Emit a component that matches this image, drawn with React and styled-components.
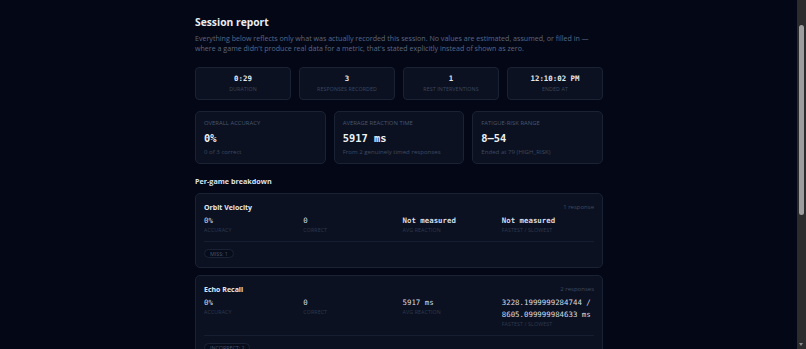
import React from 'react';
import styled, { createGlobalStyle } from 'styled-components';

const GlobalStyle = createGlobalStyle`
    html, body {
        margin: 0;
        padding: 0;
        background-color: #040716;
    }
    body {
        font-family: "Open Sans", "Noto Sans", sans-serif;
        color: #e2e8f0;
    }
    * {
        box-sizing: border-box;
    }
`;

const PageDiv = styled.div`
    min-height: 590px;
    padding: 15px 8px 40px 0px;
`;

// drawn scrollbar, sits over the right edge like the browser's own
const ScrollTrack = styled.div`
    position: fixed;
    top: 0px;
    right: 0px;
    width: 9px;
    height: 100vh;
    background-color: #2c2c2e;
`;

const ScrollThumb = styled.div`
    position: absolute;
    left: 2px;
    top: 25px;
    width: 5px;
    height: 190px;
    border-radius: 3px;
    background-color: #9d9d9f;
`;

const ScrollArrow = styled.div`
    position: absolute;
    left: 2px;
    bottom: 3px;
    width: 0px;
    height: 0px;
    border-left: 2.5px solid transparent;
    border-right: 2.5px solid transparent;
    border-top: 3px solid #8a8a8c;
`;

const ReportDiv = styled.div`
    width: 408px;
    margin: 0 auto;
`;

const TitleH1 = styled.h1`
    font-size: 10.3px;
    line-height: 14px;
    font-weight: 700;
    margin: 0px;
    color: #e8edf4;
`;

const IntroP = styled.p`
    font-size: 7.1px;
    line-height: 10px;
    margin: 4px 0px 0px 0px;
    color: #5a6882;
`;

const TileRow = styled.div`
    display: grid;
    grid-template-columns: repeat(4, 1fr);
    gap: 8px;
    margin-top: 14px;
`;

const Tile = styled.div`
    background-color: #0b1120;
    border: 1px solid #1a2234;
    border-radius: 4px;
    padding: 6px 4px 6px 4px;
    text-align: center;
`;

const TileValue = styled.div`
    font-family: "DejaVu Sans Mono", "Liberation Mono", monospace;
    font-weight: 700;
    font-size: 7.4px;
    line-height: 10px;
    color: #e2e8f0;
`;

const SmallLabel = styled.div`
    font-size: 5.3px;
    line-height: 7px;
    text-transform: uppercase;
    letter-spacing: 0.1px;
    color: ${props => props.dim ? '#2f3a50' : '#3c4860'};
    margin-top: ${props => props.gap || 0}px;
`;

const MetricRow = styled.div`
    display: grid;
    grid-template-columns: repeat(3, 1fr);
    gap: 8px;
    margin-top: 11px;
`;

const MetricCard = styled.div`
    background-color: #0b1120;
    border: 1px solid #1a2234;
    border-radius: 5px;
    padding: 8px 8px 7px 8px;
`;

const MetricLabel = styled.div`
    font-size: 5.9px;
    line-height: 7px;
    text-transform: uppercase;
    color: #4a566d;
`;

const MetricValue = styled.div`
    font-family: "DejaVu Sans Mono", "Liberation Mono", monospace;
    font-weight: 700;
    font-size: 10.4px;
    line-height: 13px;
    margin-top: 4.5px;
    color: #eef2f7;
`;

const MetricSub = styled.div`
    font-size: 6.1px;
    line-height: 8px;
    margin-top: 3.5px;
    color: #3e4a60;
`;

const SectionH2 = styled.h2`
    font-size: 7.2px;
    line-height: 10px;
    font-weight: 700;
    margin: 12px 0px 7px 0px;
    color: #dbe2ec;
`;

const GameCard = styled.div`
    background-color: #0b1120;
    border: 1px solid #1a2234;
    border-radius: 5px;
    padding: 8px 8px 9px 8px;
    margin-bottom: 7px;
`;

const GameHeader = styled.div`
    display: flex;
    justify-content: space-between;
    align-items: center;
    height: 10px;
`;

const GameName = styled.div`
    font-size: 7px;
    font-weight: 700;
    color: #e2e8f0;
`;

const GameCount = styled.div`
    font-size: 6px;
    color: #3e4a60;
`;

const StatGrid = styled.div`
    display: grid;
    grid-template-columns: repeat(4, 1fr);
    gap: 7px;
    margin-top: 3px;
`;

const StatValue = styled.div`
    font-family: "DejaVu Sans Mono", "Liberation Mono", monospace;
    font-size: 7.4px;
    line-height: 12px;
    font-weight: ${props => props.strong ? 700 : 400};
    color: #d5dce6;
`;

const Divider = styled.div`
    height: 1px;
    background-color: #161e2f;
    margin-top: 7px;
`;

const ChipRow = styled.div`
    display: flex;
    gap: 4px;
    margin-top: 7px;
`;

const Chip = styled.span`
    height: 9px;
    line-height: 8px;
    padding: 0px 5px;
    border-radius: 5px;
    border: 1px solid #1a2336;
    background-color: #070c1a;
    font-size: 5.3px;
    text-transform: uppercase;
    color: #4a566d;
`;

const tiles = [
    { value: '0:29', label: 'Duration' },
    { value: '3', label: 'Responses recorded' },
    { value: '1', label: 'Rest interventions' },
    { value: '12:10:02 PM', label: 'Ended at' }
];

const metrics = [
    { label: 'Overall accuracy', value: '0%', sub: '0 of 3 correct' },
    { label: 'Average reaction time', value: '5917 ms', sub: 'From 2 genuinely timed responses' },
    { label: 'Fatigue-risk range', value: '8–54', sub: 'Ended at 79 (HIGH_RISK)' }
];

const games = [
    {
        name: 'Orbit Velocity',
        count: '1 response',
        stats: [
            { value: '0%', label: 'Accuracy' },
            { value: '0', label: 'Correct' },
            { value: 'Not measured', label: 'Avg reaction', strong: true },
            { value: 'Not measured', label: 'Fastest / slowest', strong: true }
        ],
        chips: ['Miss: 1']
    },
    {
        name: 'Echo Recall',
        count: '2 responses',
        stats: [
            { value: '0%', label: 'Accuracy' },
            { value: '0', label: 'Correct' },
            { value: '5917 ms', label: 'Avg reaction' },
            { value: '3228.1999999284744 / 8605.099999984633 ms', label: 'Fastest / slowest' }
        ],
        chips: ['Incorrect: 2']
    }
];

class App extends React.Component {
    render() {
        return (
            <PageDiv>
                <GlobalStyle />
                <ReportDiv>
                    <TitleH1>Session report</TitleH1>
                    <IntroP>
                        Everything below reflects only what was actually recorded this session. No values are estimated, assumed, or filled in —
                        where a game didn't produce real data for a metric, that's stated explicitly instead of shown as zero.
                    </IntroP>

                    <TileRow>
                        {tiles.map(tile => (
                            <Tile key={tile.label}>
                                <TileValue>{tile.value}</TileValue>
                                <SmallLabel gap={2}>{tile.label}</SmallLabel>
                            </Tile>
                        ))}
                    </TileRow>

                    <MetricRow>
                        {metrics.map(metric => (
                            <MetricCard key={metric.label}>
                                <MetricLabel>{metric.label}</MetricLabel>
                                <MetricValue>{metric.value}</MetricValue>
                                <MetricSub>{metric.sub}</MetricSub>
                            </MetricCard>
                        ))}
                    </MetricRow>

                    <SectionH2>Per-game breakdown</SectionH2>

                    {games.map(game => (
                        <GameCard key={game.name}>
                            <GameHeader>
                                <GameName>{game.name}</GameName>
                                <GameCount>{game.count}</GameCount>
                            </GameHeader>
                            <StatGrid>
                                {game.stats.map(stat => (
                                    <div key={stat.label}>
                                        <StatValue strong={stat.strong}>{stat.value}</StatValue>
                                        <SmallLabel dim>{stat.label}</SmallLabel>
                                    </div>
                                ))}
                            </StatGrid>
                            <Divider />
                            <ChipRow>
                                {game.chips.map(chip => (
                                    <Chip key={chip}>{chip}</Chip>
                                ))}
                            </ChipRow>
                        </GameCard>
                    ))}
                </ReportDiv>
                <ScrollTrack>
                    <ScrollThumb />
                    <ScrollArrow />
                </ScrollTrack>
            </PageDiv>
        );
    }
}

export default App;
